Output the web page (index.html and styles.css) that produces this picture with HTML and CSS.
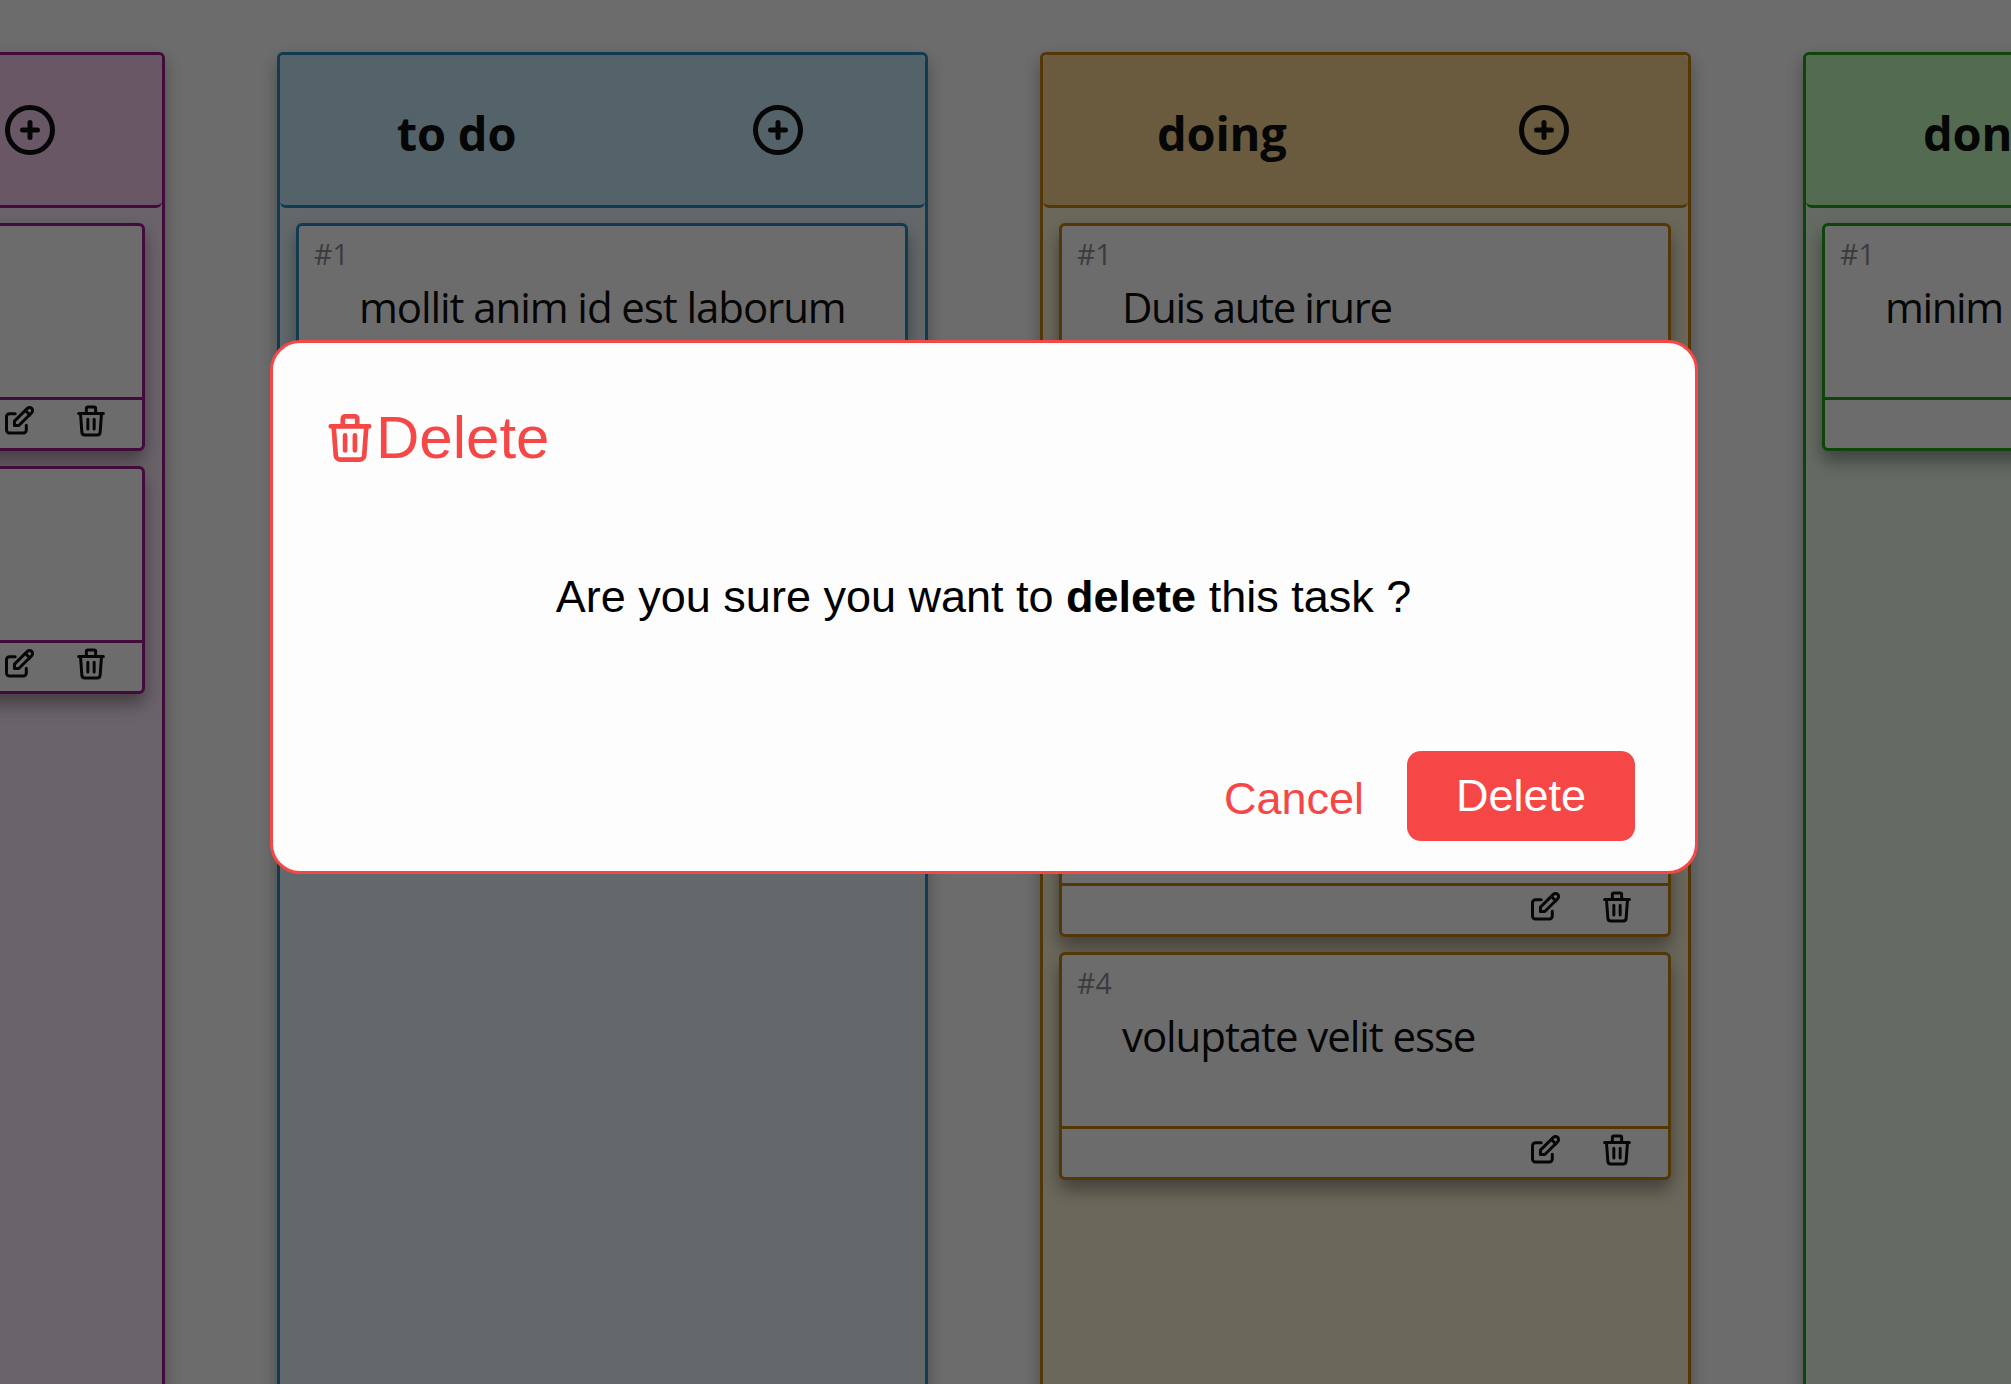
FILE: index.html
```html
<!DOCTYPE html>
<html lang="en">
<head>
<meta charset="utf-8">
<title>Task board</title>
<link rel="stylesheet" href="styles.css">
</head>
<body>
<svg class="sprite" width="0" height="0" aria-hidden="true">
  <symbol id="plus" viewBox="0 0 24 24"><circle cx="12" cy="12" r="9"/><path d="M12 9v6M9 12h6"/></symbol>
  <symbol id="edit" viewBox="0 0 24 24"><path d="M8.8 7.1H5a2 2 0 0 0-2 2V18a2 2 0 0 0 2 2h9.2a2 2 0 0 0 2-2v-3.2"/><path d="M8.3 15v-2.9l8.6-8.5a2.05 2.05 0 0 1 2.9 2.9L11.2 15z"/><path d="M15.6 5l2.9 2.9"/></symbol>
  <symbol id="trash" viewBox="0 0 24 24"><path d="M3.75 7h16.5M5 7l.9 12.4a2 2 0 0 0 2 1.9h8.2a2 2 0 0 0 2-1.9L19 7M8.9 7V3.7a1 1 0 0 1 1-1h4.2a1 1 0 0 1 1 1V7M9.9 10.9v6.4M14.1 10.9v6.4"/></symbol>
</svg>
<main class="board">
  <section class="column pink">
    <header class="head"><h2 class="title backlog"></h2><svg class="add"><use href="#plus"/></svg></header>
    <div class="cards">
      <article class="card"><div class="body"></div><footer class="actions"><svg><use href="#edit"/></svg><svg><use href="#trash"/></svg></footer></article>
      <article class="card"><div class="body"></div><footer class="actions"><svg><use href="#edit"/></svg><svg><use href="#trash"/></svg></footer></article>
    </div>
  </section>
  <section class="column blue">
    <header class="head"><h2 class="title todo">to do</h2><svg class="add"><use href="#plus"/></svg></header>
    <div class="cards">
      <article class="card"><div class="body"><span class="num">#1</span><p class="text">mollit anim id est laborum</p></div><footer class="actions"><svg><use href="#edit"/></svg><svg><use href="#trash"/></svg></footer></article>
      <article class="card"><div class="body"></div><footer class="actions"><svg><use href="#edit"/></svg><svg><use href="#trash"/></svg></footer></article>
    </div>
  </section>
  <section class="column amber">
    <header class="head"><h2 class="title doing">doing</h2><svg class="add"><use href="#plus"/></svg></header>
    <div class="cards">
      <article class="card"><div class="body"><span class="num">#1</span><p class="text tight">Duis aute irure</p></div><footer class="actions"><svg><use href="#edit"/></svg><svg><use href="#trash"/></svg></footer></article>
      <article class="card"><div class="body"></div><footer class="actions"><svg><use href="#edit"/></svg><svg><use href="#trash"/></svg></footer></article>
      <article class="card"><div class="body"></div><footer class="actions"><svg><use href="#edit"/></svg><svg><use href="#trash"/></svg></footer></article>
      <article class="card"><div class="body"><span class="num">#4</span><p class="text">voluptate velit esse</p></div><footer class="actions"><svg><use href="#edit"/></svg><svg><use href="#trash"/></svg></footer></article>
    </div>
  </section>
  <section class="column green">
    <header class="head"><h2 class="title done">done</h2><svg class="add"><use href="#plus"/></svg></header>
    <div class="cards">
      <article class="card"><div class="body"><span class="num">#1</span><p class="text tight">minim</p></div><footer class="actions"><svg><use href="#edit"/></svg><svg><use href="#trash"/></svg></footer></article>
    </div>
  </section>
</main>
<div class="overlay">
  <div class="modal" role="dialog">
    <div class="modal-title"><svg><use href="#trash"/></svg><span>Delete</span></div>
    <p class="message">Are you sure you want to <b>delete</b> this task ?</p>
    <div class="buttons"><button class="cancel">Cancel</button><button class="confirm">Delete</button></div>
  </div>
</div>
</body>
</html>
```

FILE: styles.css
```css
* { box-sizing: border-box; }
html { overflow: hidden; }
body {
  margin: 0;
  height: 1384px;
  overflow: hidden;
  background: #fff;
  color: #000;
  font-family: "Open Sans", "Noto Sans", sans-serif;
}
h2, p { margin: 0; }
.sprite { position: absolute; }
svg {
  fill: none;
  stroke: currentColor;
  stroke-width: 2;
  stroke-linecap: round;
  stroke-linejoin: round;
  flex: none;
}
.board {
  display: flex;
  gap: 112px;
  margin-left: -486px;
  padding-top: 52px;
  width: 3000px;
}
.column {
  width: 651px;
  height: 1500px;
  border: 3px solid var(--line);
  border-radius: 6px;
  background: var(--bg);
  box-shadow: 0 8px 18px rgba(0, 0, 0, .32);
}
.pink { --line: #980a87; --head: #f7caf0; --bg: #fce8fa; }
.blue { --line: #1b84b9; --head: #c3e6f7; --bg: #e8f7fc; }
.amber { --line: #c07a02; --head: #fad48e; --bg: #fcf5d4; }
.green { --line: #149d0c; --head: #c0fcbb; --bg: #e8fce6; }
.head {
  display: flex;
  align-items: center;
  justify-content: space-around;
  height: 153px;
  border-bottom: 3px solid var(--line);
  border-radius: 6px;
  background: var(--head);
}
.add { width: 60px; height: 60px; }
.title {
  padding-top: 5px;
  font-size: 47px;
  line-height: 60px;
  font-weight: 700;
  letter-spacing: -.2px;
  white-space: nowrap;
}
.backlog { width: 177px; }
.todo { width: 118px; }
.doing { width: 129px; }
.done { width: 117px; }
.cards {
  display: flex;
  flex-direction: column;
  gap: 15px;
  padding: 15px 17px 0 16px;
}
.card {
  height: 228px;
  border: 3px solid var(--line);
  border-radius: 6px;
  background: #fff;
  box-shadow: 0 10px 18px rgba(0, 0, 0, .4);
}
.body {
  height: 171px;
  padding: 8px 15px 0;
}
.num {
  display: block;
  color: #8a828a;
  font-size: 28.5px;
  line-height: 40px;
}
.text {
  margin-top: 8px;
  padding-left: 45px;
  font-size: 42px;
  line-height: 50px;
  letter-spacing: -1.08px;
  white-space: nowrap;
}
.tight { letter-spacing: -1.4px; }
.actions {
  display: flex;
  justify-content: flex-end;
  gap: 35px;
  padding: 3px 33px 0 0;
  height: 51px;
  border-top: 3px solid var(--line);
}
.actions svg { width: 36px; height: 36px; }
.overlay {
  position: fixed;
  inset: 0;
  background: rgba(10, 10, 10, .6);
}
.modal {
  display: flex;
  flex-direction: column;
  width: 1428px;
  height: 534px;
  margin: 340px 0 0 270px;
  padding: 67px 60px 30px 49px;
  border: 3px solid #f64747;
  border-radius: 30px;
  background: #fdfdfd;
  font-family: "Liberation Sans", Arial, sans-serif;
}
.modal-title {
  display: flex;
  align-items: center;
  height: 56px;
  color: #f64747;
  font-size: 60px;
}
.modal-title svg { width: 56px; height: 56px; }
.modal-title span { margin: -2px 0 0 -2px; }
.message {
  margin-top: 101px;
  padding-left: 10px;
  font-size: 45px;
  line-height: 60px;
  text-align: center;
  white-space: nowrap;
}
.buttons {
  display: flex;
  justify-content: flex-end;
  align-items: center;
  gap: 43px;
  margin-top: auto;
}
button {
  border: 0;
  padding: 0;
  font: 45px "Liberation Sans", Arial, sans-serif;
}
.cancel {
  padding-top: 5px;
  background: none;
  color: #f64747;
}
.confirm {
  width: 228px;
  height: 90px;
  border-radius: 14px;
  background: #f64747;
  color: #fff;
}
```
